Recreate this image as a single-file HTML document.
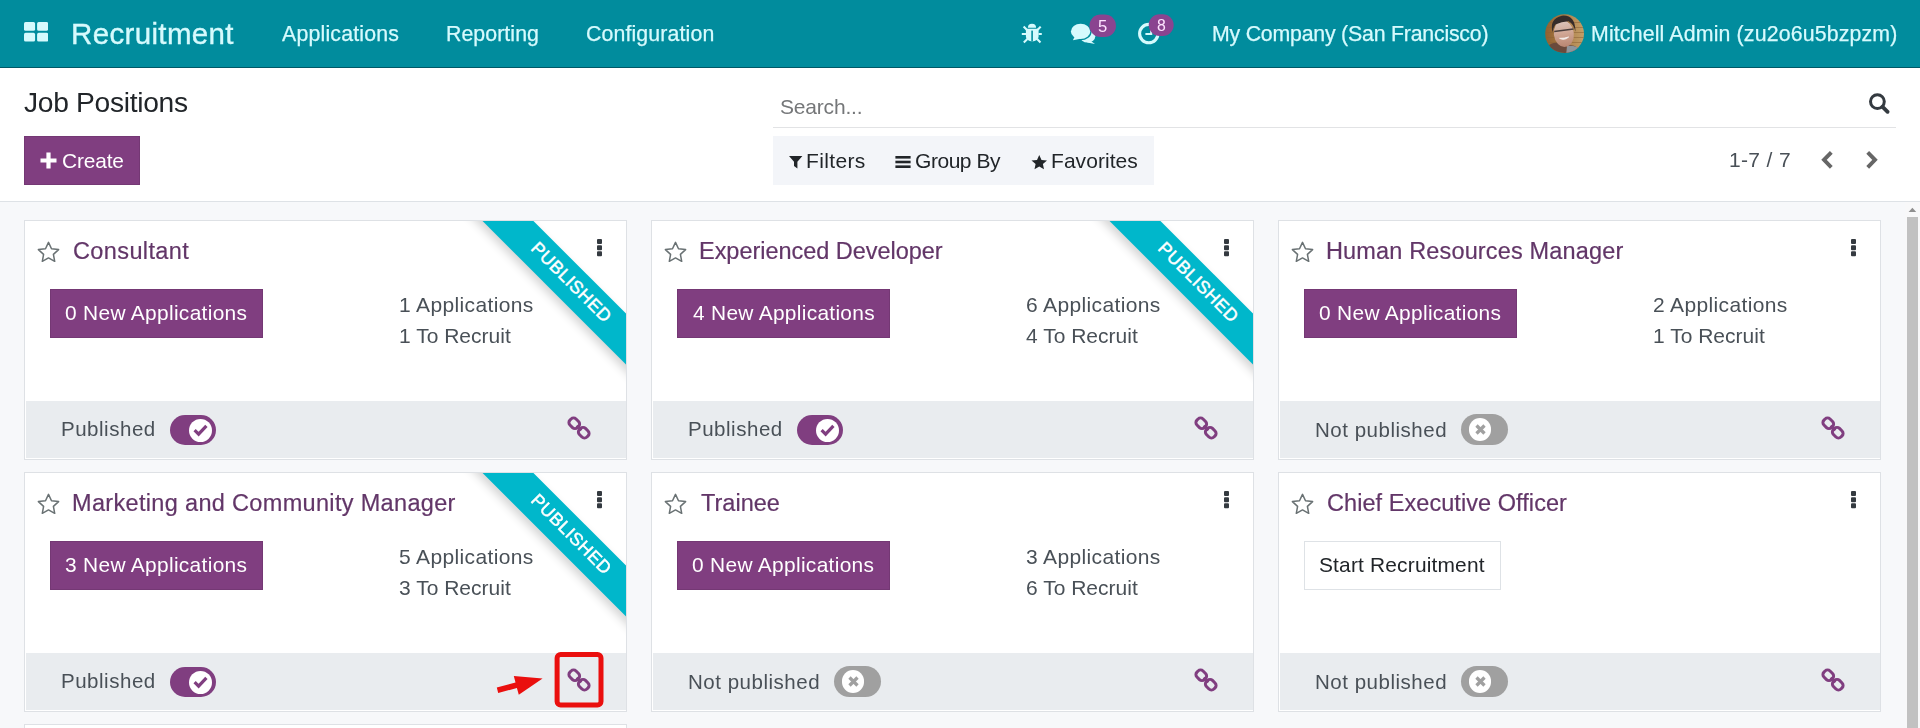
<!DOCTYPE html><html><head><meta charset="utf-8"><title>Job Positions</title><style>
*{box-sizing:border-box;margin:0;padding:0}
html,body{width:1920px;height:728px;overflow:hidden;background:#f7f8fa;font-family:"Liberation Sans",sans-serif;}
body{position:relative}
.abs{position:absolute}
.t{position:absolute;white-space:nowrap;line-height:1;will-change:transform}
#nav{position:absolute;left:0;top:0;width:1920px;height:68px;background:#018c9d;border-bottom:1px solid #005866}
#cp{position:absolute;left:0;top:68px;width:1920px;height:134px;background:#fff;border-bottom:1px solid #dee2e6}
.btnp{position:absolute;background:#803e80;border:1px solid #743874}
.card{position:absolute;width:603px;height:240px;background:#fff;border:1px solid #dee1e5;overflow:hidden}
.card .foot{position:absolute;left:1px;top:180px;width:600px;height:57px;background:#e9ecef}
.rib{position:absolute;left:395px;top:43.5px;width:300px;height:36px;background:#00b7cb;transform:rotate(45deg);transform-origin:50% 50%;box-shadow:0 5px 10px rgba(0,0,0,.17)}
.ribt{position:absolute;left:395.9px;top:44.3px;width:300px;height:35.4px;transform:rotate(45deg);transform-origin:50% 50%;color:#fff;text-align:center;font-size:17.8px;line-height:35.4px;letter-spacing:0.5px;-webkit-text-stroke:0.45px #fff}
</style></head><body><div id="nav">
<svg class="abs" style="left:24.2px;top:22.2px" width="24.2" height="19.6" viewBox="0 0 24.2 19.6"><g fill="#d6fafd"><rect x="0" y="0" width="11.1" height="8.8" rx="1.6"/><rect x="13.1" y="0" width="11.1" height="8.8" rx="1.6"/><rect x="0" y="10.8" width="11.1" height="8.8" rx="1.6"/><rect x="13.1" y="10.8" width="11.1" height="8.8" rx="1.6"/></g></svg>
<div class="t" style="left:70.98px;top:19.00px;font-size:29.5px;letter-spacing:0.351px;color:#d6fafd;-webkit-text-stroke:0.35px #d6fafd">Recruitment</div>
<div class="t" style="left:282.46px;top:24.00px;font-size:21.3px;letter-spacing:0.196px;color:#d6fafd;-webkit-text-stroke:0.25px #d6fafd">Applications</div>
<div class="t" style="left:446.05px;top:24.00px;font-size:21.3px;letter-spacing:0.07px;color:#d6fafd;-webkit-text-stroke:0.25px #d6fafd">Reporting</div>
<div class="t" style="left:585.62px;top:24.00px;font-size:21.3px;letter-spacing:0.131px;color:#d6fafd;-webkit-text-stroke:0.25px #d6fafd">Configuration</div>
<div class="t" style="left:1212.25px;top:24.00px;font-size:21.3px;letter-spacing:-0.206px;color:#d6fafd;-webkit-text-stroke:0.25px #d6fafd">My Company (San Francisco)</div>
<div class="t" style="left:1590.55px;top:24.00px;font-size:21.3px;letter-spacing:0.16px;color:#d6fafd;-webkit-text-stroke:0.25px #d6fafd">Mitchell Admin (zu2o6u5bzpzm)</div>
</div><div id="cp">
<div class="t" style="left:23.96px;top:20.00px;font-size:28.2px;letter-spacing:-0.306px;color:#212529">Job Positions</div>
<div class="btnp" style="left:24px;top:68px;width:116px;height:49px"></div>
<svg class="abs" style="left:40px;top:84px" width="17" height="17" viewBox="0 0 17 17"><path d="M8.5 0.5 V16.5 M0.5 8.5 H16.5" stroke="#fff" stroke-width="4.2" fill="none"/></svg>
<div class="t" style="left:61.94px;top:83.00px;font-size:20.9px;letter-spacing:-0.148px;color:#fff">Create</div>
<div class="abs" style="left:773px;top:59px;width:1123px;height:1px;background:#e2e3e5"></div>
<div class="t" style="left:779.85px;top:28.00px;font-size:21px;letter-spacing:-0.184px;color:#757779">Search...</div>
<div class="abs" style="left:773px;top:68px;width:381px;height:49px;background:#f3f5f9"></div>
<div class="t" style="left:806.28px;top:82.00px;font-size:21px;letter-spacing:0.353px;color:#212529">Filters</div>
<div class="t" style="left:914.74px;top:82.00px;font-size:21px;letter-spacing:-0.459px;color:#212529">Group By</div>
<div class="t" style="left:1050.98px;top:82.00px;font-size:21px;letter-spacing:0.053px;color:#212529">Favorites</div>
<div class="t" style="left:1729.40px;top:81.00px;font-size:21px;letter-spacing:0.337px;color:#495057">1-7 / 7</div>
</div><div class="card" style="left:24px;top:220px"><svg class="abs" style="left:11.2px;top:19.2px" width="25" height="24" viewBox="0 0 25 24"><path d="M12.5 2.4 L15.5 8.7 L22.6 9.6 L17.4 14.4 L18.7 21.3 L12.5 17.9 L6.3 21.3 L7.6 14.4 L2.4 9.6 L9.5 8.7 Z" fill="none" stroke="#697173" stroke-width="1.5" stroke-linejoin="round"/></svg><div class="t" style="left:48.21px;top:19.00px;font-size:23.5px;letter-spacing:0.38px;color:#623668;-webkit-text-stroke:0.2px #623668">Consultant</div><div class="rib"></div><div class="ribt">PUBLISHED</div><div class="abs" style="left:571.8px;top:18px;width:5.3px;height:4.6px;background:#343a40;border-radius:1px;box-shadow:0 6.15px 0 #343a40,0 12.3px 0 #343a40"></div><div class="btnp" style="left:25px;top:68px;width:213px;height:49px"></div><div class="t" style="left:40.18px;top:82.00px;font-size:20.9px;letter-spacing:0.322px;color:#fff">0 New Applications</div><div class="t" style="left:374.40px;top:73.00px;font-size:21px;letter-spacing:0.367px;color:#495057">1 Applications</div><div class="t" style="left:374.40px;top:104.00px;font-size:21px;letter-spacing:0.008px;color:#495057">1 To Recruit</div><div class="foot"></div><div class="t" style="left:35.52px;top:198.00px;font-size:20.5px;letter-spacing:0.521px;color:#495057">Published</div><div class="abs" style="left:145px;top:194px;width:46px;height:30px;border-radius:15px;background:#803e80"></div><div class="abs" style="left:164px;top:197.5px;width:23px;height:23px;border-radius:50%;background:#fff"></div><svg class="abs" style="left:164px;top:197.5px" width="23" height="23" viewBox="0 0 23 23"><path d="M5.6 11.2 L9.6 15.2 L17.4 6.8" fill="none" stroke="#803e80" stroke-width="3.2"/></svg><svg class="abs" style="left:540.05px;top:193.25px" width="28" height="28" viewBox="-14 -14 28 28"><g fill="none" stroke="#803e80" stroke-width="3" transform="rotate(45)"><rect x="-12" y="-4.3" width="10.6" height="8.6" rx="3.5"/><rect x="1.4" y="-4.3" width="10.6" height="8.6" rx="3.5"/><path d="M-3.4 0 H3.4" stroke-width="2.6"/></g></svg></div><div class="card" style="left:651px;top:220px"><svg class="abs" style="left:11.2px;top:19.2px" width="25" height="24" viewBox="0 0 25 24"><path d="M12.5 2.4 L15.5 8.7 L22.6 9.6 L17.4 14.4 L18.7 21.3 L12.5 17.9 L6.3 21.3 L7.6 14.4 L2.4 9.6 L9.5 8.7 Z" fill="none" stroke="#697173" stroke-width="1.5" stroke-linejoin="round"/></svg><div class="t" style="left:47.47px;top:19.00px;font-size:23.5px;letter-spacing:-0.033px;color:#623668;-webkit-text-stroke:0.2px #623668">Experienced Developer</div><div class="rib"></div><div class="ribt">PUBLISHED</div><div class="abs" style="left:571.8px;top:18px;width:5.3px;height:4.6px;background:#343a40;border-radius:1px;box-shadow:0 6.15px 0 #343a40,0 12.3px 0 #343a40"></div><div class="btnp" style="left:25px;top:68px;width:213px;height:49px"></div><div class="t" style="left:40.52px;top:82.00px;font-size:20.9px;letter-spacing:0.303px;color:#fff">4 New Applications</div><div class="t" style="left:374.40px;top:73.00px;font-size:21px;letter-spacing:0.367px;color:#495057">6 Applications</div><div class="t" style="left:374.40px;top:104.00px;font-size:21px;letter-spacing:0.008px;color:#495057">4 To Recruit</div><div class="foot"></div><div class="t" style="left:35.52px;top:198.00px;font-size:20.5px;letter-spacing:0.521px;color:#495057">Published</div><div class="abs" style="left:145px;top:194px;width:46px;height:30px;border-radius:15px;background:#803e80"></div><div class="abs" style="left:164px;top:197.5px;width:23px;height:23px;border-radius:50%;background:#fff"></div><svg class="abs" style="left:164px;top:197.5px" width="23" height="23" viewBox="0 0 23 23"><path d="M5.6 11.2 L9.6 15.2 L17.4 6.8" fill="none" stroke="#803e80" stroke-width="3.2"/></svg><svg class="abs" style="left:540.05px;top:193.25px" width="28" height="28" viewBox="-14 -14 28 28"><g fill="none" stroke="#803e80" stroke-width="3" transform="rotate(45)"><rect x="-12" y="-4.3" width="10.6" height="8.6" rx="3.5"/><rect x="1.4" y="-4.3" width="10.6" height="8.6" rx="3.5"/><path d="M-3.4 0 H3.4" stroke-width="2.6"/></g></svg></div><div class="card" style="left:1278px;top:220px"><svg class="abs" style="left:11.2px;top:19.2px" width="25" height="24" viewBox="0 0 25 24"><path d="M12.5 2.4 L15.5 8.7 L22.6 9.6 L17.4 14.4 L18.7 21.3 L12.5 17.9 L6.3 21.3 L7.6 14.4 L2.4 9.6 L9.5 8.7 Z" fill="none" stroke="#697173" stroke-width="1.5" stroke-linejoin="round"/></svg><div class="t" style="left:47.47px;top:19.00px;font-size:23.5px;letter-spacing:0.151px;color:#623668;-webkit-text-stroke:0.2px #623668">Human Resources Manager</div><div class="abs" style="left:571.8px;top:18px;width:5.3px;height:4.6px;background:#343a40;border-radius:1px;box-shadow:0 6.15px 0 #343a40,0 12.3px 0 #343a40"></div><div class="btnp" style="left:25px;top:68px;width:213px;height:49px"></div><div class="t" style="left:40.18px;top:82.00px;font-size:20.9px;letter-spacing:0.322px;color:#fff">0 New Applications</div><div class="t" style="left:374.40px;top:73.00px;font-size:21px;letter-spacing:0.367px;color:#495057">2 Applications</div><div class="t" style="left:374.40px;top:104.00px;font-size:21px;letter-spacing:0.008px;color:#495057">1 To Recruit</div><div class="foot"></div><div class="t" style="left:35.72px;top:199.00px;font-size:20.5px;letter-spacing:0.52px;color:#495057">Not published</div><div class="abs" style="left:182px;top:193px;width:47px;height:31px;border-radius:15.5px;background:#a0a0a0"></div><div class="abs" style="left:189.8px;top:197px;width:22.6px;height:22.6px;border-radius:50%;background:#fff"></div><svg class="abs" style="left:189.6px;top:196.8px" width="23" height="23" viewBox="0 0 23 23"><path d="M7.5 7.5 L15.5 15.5 M15.5 7.5 L7.5 15.5" fill="none" stroke="#a0a0a0" stroke-width="3.3"/></svg><svg class="abs" style="left:540.05px;top:193.25px" width="28" height="28" viewBox="-14 -14 28 28"><g fill="none" stroke="#803e80" stroke-width="3" transform="rotate(45)"><rect x="-12" y="-4.3" width="10.6" height="8.6" rx="3.5"/><rect x="1.4" y="-4.3" width="10.6" height="8.6" rx="3.5"/><path d="M-3.4 0 H3.4" stroke-width="2.6"/></g></svg></div><div class="card" style="left:24px;top:472px"><svg class="abs" style="left:11.2px;top:19.2px" width="25" height="24" viewBox="0 0 25 24"><path d="M12.5 2.4 L15.5 8.7 L22.6 9.6 L17.4 14.4 L18.7 21.3 L12.5 17.9 L6.3 21.3 L7.6 14.4 L2.4 9.6 L9.5 8.7 Z" fill="none" stroke="#697173" stroke-width="1.5" stroke-linejoin="round"/></svg><div class="t" style="left:47.47px;top:19.00px;font-size:23.5px;letter-spacing:0.329px;color:#623668;-webkit-text-stroke:0.2px #623668">Marketing and Community Manager</div><div class="rib"></div><div class="ribt">PUBLISHED</div><div class="abs" style="left:571.8px;top:18px;width:5.3px;height:4.6px;background:#343a40;border-radius:1px;box-shadow:0 6.15px 0 #343a40,0 12.3px 0 #343a40"></div><div class="btnp" style="left:25px;top:68px;width:213px;height:49px"></div><div class="t" style="left:40.20px;top:82.00px;font-size:20.9px;letter-spacing:0.321px;color:#fff">3 New Applications</div><div class="t" style="left:374.40px;top:73.00px;font-size:21px;letter-spacing:0.367px;color:#495057">5 Applications</div><div class="t" style="left:374.40px;top:104.00px;font-size:21px;letter-spacing:0.008px;color:#495057">3 To Recruit</div><div class="foot"></div><div class="t" style="left:35.52px;top:198.00px;font-size:20.5px;letter-spacing:0.521px;color:#495057">Published</div><div class="abs" style="left:145px;top:194px;width:46px;height:30px;border-radius:15px;background:#803e80"></div><div class="abs" style="left:164px;top:197.5px;width:23px;height:23px;border-radius:50%;background:#fff"></div><svg class="abs" style="left:164px;top:197.5px" width="23" height="23" viewBox="0 0 23 23"><path d="M5.6 11.2 L9.6 15.2 L17.4 6.8" fill="none" stroke="#803e80" stroke-width="3.2"/></svg><svg class="abs" style="left:540.05px;top:193.25px" width="28" height="28" viewBox="-14 -14 28 28"><g fill="none" stroke="#803e80" stroke-width="3" transform="rotate(45)"><rect x="-12" y="-4.3" width="10.6" height="8.6" rx="3.5"/><rect x="1.4" y="-4.3" width="10.6" height="8.6" rx="3.5"/><path d="M-3.4 0 H3.4" stroke-width="2.6"/></g></svg></div><div class="card" style="left:651px;top:472px"><svg class="abs" style="left:11.2px;top:19.2px" width="25" height="24" viewBox="0 0 25 24"><path d="M12.5 2.4 L15.5 8.7 L22.6 9.6 L17.4 14.4 L18.7 21.3 L12.5 17.9 L6.3 21.3 L7.6 14.4 L2.4 9.6 L9.5 8.7 Z" fill="none" stroke="#697173" stroke-width="1.5" stroke-linejoin="round"/></svg><div class="t" style="left:48.87px;top:19.00px;font-size:23.5px;letter-spacing:0.019px;color:#623668;-webkit-text-stroke:0.2px #623668">Trainee</div><div class="abs" style="left:571.8px;top:18px;width:5.3px;height:4.6px;background:#343a40;border-radius:1px;box-shadow:0 6.15px 0 #343a40,0 12.3px 0 #343a40"></div><div class="btnp" style="left:25px;top:68px;width:213px;height:49px"></div><div class="t" style="left:40.18px;top:82.00px;font-size:20.9px;letter-spacing:0.322px;color:#fff">0 New Applications</div><div class="t" style="left:374.40px;top:73.00px;font-size:21px;letter-spacing:0.367px;color:#495057">3 Applications</div><div class="t" style="left:374.40px;top:104.00px;font-size:21px;letter-spacing:0.008px;color:#495057">6 To Recruit</div><div class="foot"></div><div class="t" style="left:35.72px;top:199.00px;font-size:20.5px;letter-spacing:0.52px;color:#495057">Not published</div><div class="abs" style="left:182px;top:193px;width:47px;height:31px;border-radius:15.5px;background:#a0a0a0"></div><div class="abs" style="left:189.8px;top:197px;width:22.6px;height:22.6px;border-radius:50%;background:#fff"></div><svg class="abs" style="left:189.6px;top:196.8px" width="23" height="23" viewBox="0 0 23 23"><path d="M7.5 7.5 L15.5 15.5 M15.5 7.5 L7.5 15.5" fill="none" stroke="#a0a0a0" stroke-width="3.3"/></svg><svg class="abs" style="left:540.05px;top:193.25px" width="28" height="28" viewBox="-14 -14 28 28"><g fill="none" stroke="#803e80" stroke-width="3" transform="rotate(45)"><rect x="-12" y="-4.3" width="10.6" height="8.6" rx="3.5"/><rect x="1.4" y="-4.3" width="10.6" height="8.6" rx="3.5"/><path d="M-3.4 0 H3.4" stroke-width="2.6"/></g></svg></div><div class="card" style="left:1278px;top:472px"><svg class="abs" style="left:11.2px;top:19.2px" width="25" height="24" viewBox="0 0 25 24"><path d="M12.5 2.4 L15.5 8.7 L22.6 9.6 L17.4 14.4 L18.7 21.3 L12.5 17.9 L6.3 21.3 L7.6 14.4 L2.4 9.6 L9.5 8.7 Z" fill="none" stroke="#697173" stroke-width="1.5" stroke-linejoin="round"/></svg><div class="t" style="left:48.21px;top:19.00px;font-size:23.5px;letter-spacing:0.061px;color:#623668;-webkit-text-stroke:0.2px #623668">Chief Executive Officer</div><div class="abs" style="left:571.8px;top:18px;width:5.3px;height:4.6px;background:#343a40;border-radius:1px;box-shadow:0 6.15px 0 #343a40,0 12.3px 0 #343a40"></div><div class="abs" style="left:25px;top:68px;width:197px;height:49px;background:#fff;border:1px solid #dee2e6"></div><div class="t" style="left:40.05px;top:82.00px;font-size:20.9px;letter-spacing:0.187px;color:#212529">Start Recruitment</div><div class="foot"></div><div class="t" style="left:35.72px;top:199.00px;font-size:20.5px;letter-spacing:0.52px;color:#495057">Not published</div><div class="abs" style="left:182px;top:193px;width:47px;height:31px;border-radius:15.5px;background:#a0a0a0"></div><div class="abs" style="left:189.8px;top:197px;width:22.6px;height:22.6px;border-radius:50%;background:#fff"></div><svg class="abs" style="left:189.6px;top:196.8px" width="23" height="23" viewBox="0 0 23 23"><path d="M7.5 7.5 L15.5 15.5 M15.5 7.5 L7.5 15.5" fill="none" stroke="#a0a0a0" stroke-width="3.3"/></svg><svg class="abs" style="left:540.05px;top:193.25px" width="28" height="28" viewBox="-14 -14 28 28"><g fill="none" stroke="#803e80" stroke-width="3" transform="rotate(45)"><rect x="-12" y="-4.3" width="10.6" height="8.6" rx="3.5"/><rect x="1.4" y="-4.3" width="10.6" height="8.6" rx="3.5"/><path d="M-3.4 0 H3.4" stroke-width="2.6"/></g></svg></div><div class="card" style="left:24px;top:724px"></div><div class="abs" style="left:1905px;top:202px;width:15px;height:526px;background:#f8f8f9"></div>
<div class="abs" style="left:1907px;top:217px;width:11px;height:511px;background:#c1c1c1"></div>
<svg class="abs" style="left:1908px;top:207px" width="9" height="6" viewBox="0 0 9 6"><path d="M0.6 5 L4.4 0.7 L8.2 5 Z" fill="#8f8f8f"/></svg><svg class="abs" style="left:0;top:0;pointer-events:none" width="1920" height="728" viewBox="0 0 1920 728">
<!-- bug -->
<g fill="#d6fafd" stroke="none">
<path d="M1027.9 27.7 A4.1 3.9 0 0 1 1036.1 27.7 Z"/>
<path d="M1025.9 28.7 H1038.6 V36.5 A6.35 4.9 0 0 1 1025.9 36.5 Z"/>
<g stroke="#d6fafd" stroke-width="2.1" fill="none"><path d="M1026.8 29.8 L1023.6 26.6 M1037.7 29.8 L1040.7 26.6 M1026 34 H1021.8 M1038.5 34 H1041.8 M1027.4 39 L1023.8 42.4 M1037.1 39 L1040.5 42.4"/></g>
<rect x="1031.3" y="30.6" width="1.6" height="10.9" fill="#018c9d"/>
</g>
<!-- comments -->
<g fill="#d6fafd">
<path d="M1090.2 40.6 L1095 44.1 L1087 42.6 Z"/>
<ellipse cx="1087.6" cy="36.3" rx="7.7" ry="6.3"/>
<ellipse cx="1080.6" cy="31.4" rx="11" ry="8.9" fill="#018c9d"/>
<ellipse cx="1080.6" cy="31.4" rx="9.7" ry="7.6"/>
<path d="M1072.9 40.2 L1075.2 35.5 L1080.5 38.8 Z"/>
</g>
<!-- clock -->
<circle cx="1148.8" cy="33.6" r="9.2" fill="none" stroke="#d6fafd" stroke-width="3.1"/>
<path d="M1145.4 34 H1151.2 V28.5" fill="none" stroke="#d6fafd" stroke-width="2.1"/>
<!-- badges -->
<rect x="1089.4" y="14.5" width="26.6" height="22.6" rx="11.3" fill="#8a4490"/>
<rect x="1148.7" y="14.2" width="25" height="21.8" rx="10.9" fill="#8a4490"/>
<!-- avatar -->
<defs><clipPath id="av"><circle cx="1564.6" cy="33.7" r="19.4"/></clipPath>
<linearGradient id="avbg" x1="0" x2="1" y1="0" y2="0"><stop offset="0" stop-color="#8f5f2e"/><stop offset="0.45" stop-color="#a87a45"/><stop offset="1" stop-color="#c6a26b"/></linearGradient>
<linearGradient id="avfc" x1="0" x2="0" y1="0" y2="1"><stop offset="0" stop-color="#dcc5bc"/><stop offset="0.5" stop-color="#cfa593"/><stop offset="1" stop-color="#b98672"/></linearGradient></defs>
<g clip-path="url(#av)">
<rect x="1544" y="13" width="42" height="42" fill="url(#avbg)"/>
<path d="M1544 22.5 H1586 M1544 27.5 H1586 M1544 32.5 H1586 M1544 37.5 H1586 M1544 42.5 H1586" stroke="#8a6336" stroke-width="1" opacity="0.55"/>
<path d="M1545 56 L1547 47 Q1552 42 1558 43 L1570 45 Q1580 46 1584 56 Z" fill="#6a4a3c"/>
<path d="M1566 56 L1567 46 Q1576 45 1581 50 L1584 56 Z" fill="#8e959c"/>
<g transform="rotate(-7 1563.5 33.5)">
<ellipse cx="1563.8" cy="33.8" rx="10" ry="13.2" fill="url(#avfc)"/>
<path d="M1552.8 31 Q1551 17 1564 15.6 Q1577.5 16 1575.6 33 Q1574.5 25 1570 22 Q1563 21.5 1556.5 23.5 Q1554 26 1552.8 31 Z" fill="#362c2a"/>
<path d="M1554.5 30.3 H1574" stroke="#4b3f3d" stroke-width="1.5"/>
<path d="M1559 37.8 Q1563.5 41 1568.2 37.6 Q1563.5 38.6 1559 37.8 Z" fill="#f6efec" stroke="#f6efec" stroke-width="0.8"/>
</g>
</g>
<!-- filter icons -->
<g fill="#212529">
<path d="M789 156 H802.4 L797.4 161.7 V168.6 L794 166 V161.7 Z"/>
<rect x="895.4" y="156" width="15.2" height="2.6"/><rect x="895.4" y="160.7" width="15.2" height="2.6"/><rect x="895.4" y="165.4" width="15.2" height="2.6"/>
<path d="M1039.25 155 L1041.5 159.9 L1047 160.5 L1042.9 164.1 L1044 169.3 L1039.25 166.6 L1034.5 169.3 L1035.6 164.1 L1031.5 160.5 L1037 159.9 Z"/>
</g>
<!-- search -->
<circle cx="1877.4" cy="101.6" r="6.9" fill="none" stroke="#343a40" stroke-width="3"/>
<path d="M1882.6 106.8 L1887.6 111.8" stroke="#343a40" stroke-width="3.8" stroke-linecap="round"/>
<!-- pager -->
<path d="M1831.3 152.3 L1824 159.8 L1831.3 167.3" fill="none" stroke="#666" stroke-width="3.9"/>
<path d="M1867.7 152.3 L1875 159.8 L1867.7 167.3" fill="none" stroke="#666" stroke-width="3.9"/>
<!-- red annotation -->
<rect x="557.1" y="654.6" width="43.9" height="50.3" rx="3.5" fill="none" stroke="#ea0f0e" stroke-width="5"/>
<path d="M496.8 687.6 L515.5 682.6 L513.8 676 L542.6 678.4 L518.8 694.8 L516.9 688 L498.2 693 Z" fill="#ea0f0e"/>
</svg><div class="t" style="left:1098.24px;top:19.00px;font-size:16.6px;letter-spacing:0px;color:#fde3ff">5</div><div class="t" style="left:1156.91px;top:18.00px;font-size:15.8px;letter-spacing:0px;color:#fde3ff">8</div></body></html>
